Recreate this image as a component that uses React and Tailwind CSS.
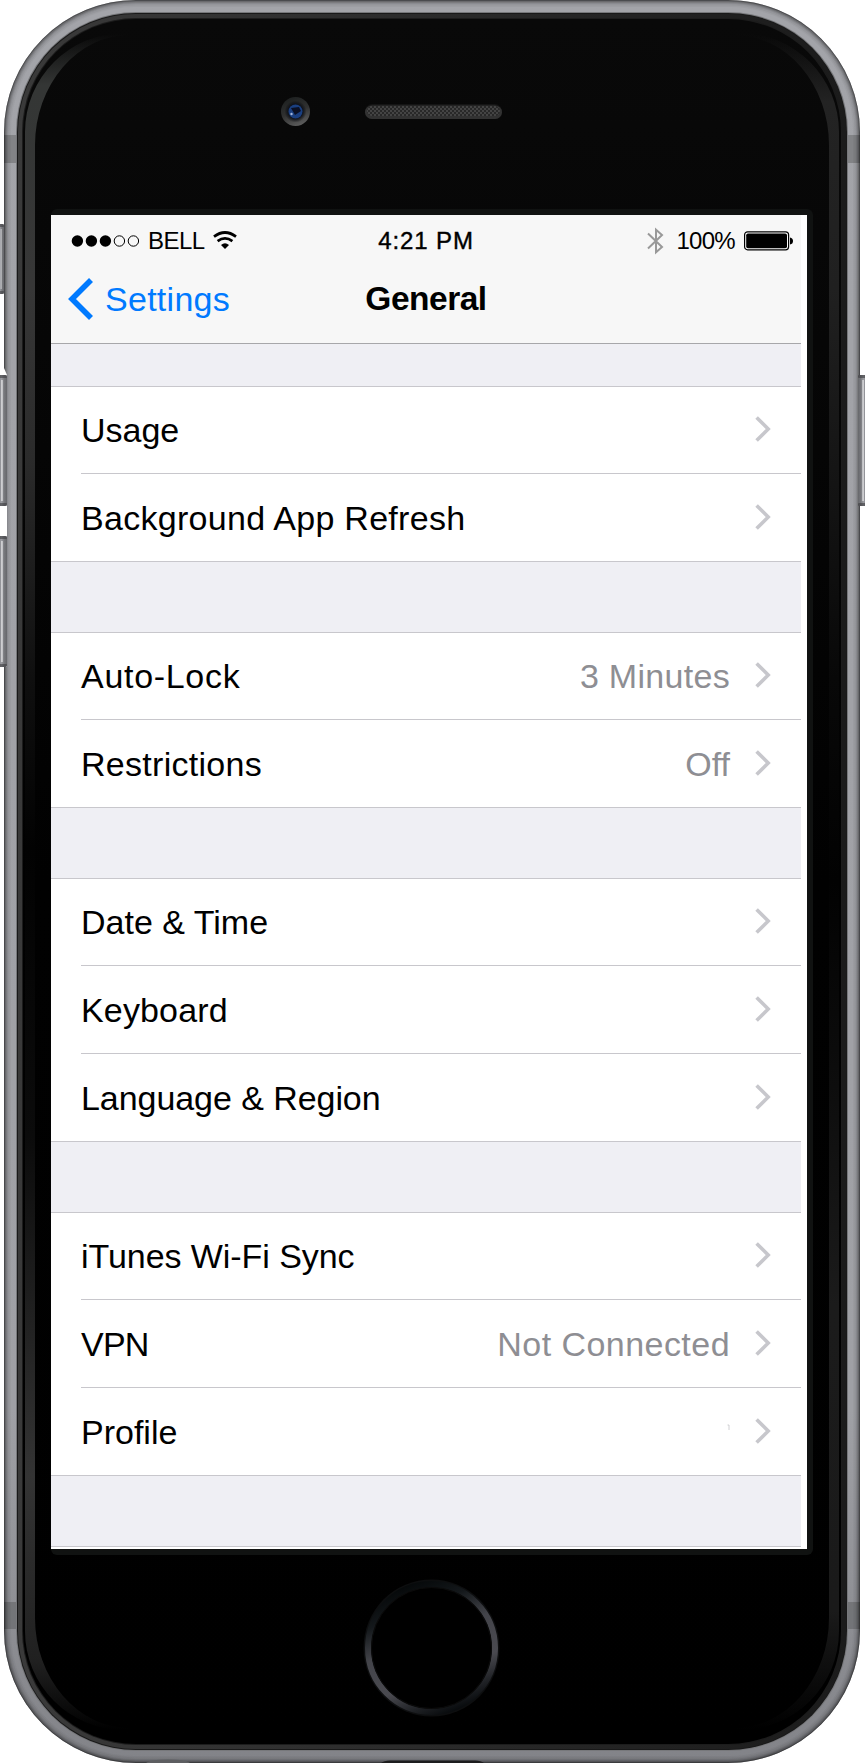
const groups = [
  [{ label: "Usage" }, { label: "Background App Refresh", tracking: "tracking-[0.29px]" }],
  [
    { label: "Auto-Lock", tracking: "tracking-[0.7px]", value: "3 Minutes", valueTracking: "tracking-[0.3px]" },
    { label: "Restrictions", tracking: "tracking-[0.28px]", value: "Off" },
  ],
  [
    { label: "Date & Time" },
    { label: "Keyboard", tracking: "tracking-[0.15px]" },
    { label: "Language & Region", tracking: "tracking-[-0.06px]" },
  ],
  [
    { label: "iTunes Wi-Fi Sync", tracking: "tracking-[-0.06px]" },
    { label: "VPN", tracking: "tracking-[-0.8px]", value: "Not Connected", valueTracking: "tracking-[0.45px]" },
    { label: "Profile", tick: true },
  ],
];

const bevel = [
  { width: 1, opacity: 0.28 },
  { width: 2, opacity: 0.14 },
  { width: 3, opacity: 0.1 },
  { width: 4, opacity: 0.07 },
  { width: 5.5, opacity: 0.05 },
  { width: 7, opacity: 0.03 },
];

const sheenPath =
  "M25 132 A99 99 0 0 1 124 33 L130 35 A95 110 0 0 0 35 145 V1618 A95 110 0 0 0 130 1728 L124 1730 A99 99 0 0 1 25 1631Z";

function Body({ inset, fill }) {
  return (
    <rect x={4 + inset} y={inset} width={856 - inset * 2} height={1763 - inset * 2} rx={132 - inset} fill={fill} />
  );
}

function SideButton({ x, y, height, width, flip }) {
  return (
    <g transform={flip ? `translate(${x + width} ${y}) scale(-1 1)` : `translate(${x} ${y})`}>
      <rect x="-4" width={width + 4} height={height} rx="2" fill="url(#button)" />
      <rect x={width * 0.15} y="5" width={width * 0.25} height={height - 10} fill="#e4e4e6" opacity="0.75" />
      <rect x="-4" width={width + 4} height="3" rx="1" fill="#3c3c40" opacity="0.6" />
      <rect x="-4" y={height - 3} width={width + 4} height="3" rx="1" fill="#3c3c40" opacity="0.6" />
    </g>
  );
}

function Hardware() {
  return (
    <svg className="absolute inset-0" width="865" height="1763" viewBox="0 0 865 1763" aria-hidden="true">
      <defs>
        <linearGradient id="metal" x1="0" y1="0" x2="0" y2="1">
          <stop offset="0" stopColor="#a3a4a9" />
          <stop offset="0.8" stopColor="#9fa0a5" />
          <stop offset="0.93" stopColor="#8c8d92" />
          <stop offset="1" stopColor="#828388" />
        </linearGradient>
        <linearGradient id="glass" x1="0" y1="0" x2="0" y2="1">
          <stop offset="0" stopColor="#090909" />
          <stop offset="0.5" stopColor="#010101" />
          <stop offset="1" stopColor="#000" />
        </linearGradient>
        <linearGradient id="rim" x1="0" y1="0" x2="1" y2="0">
          <stop offset="0" stopColor="#3a3a3a" />
          <stop offset="1" stopColor="#1b1b1b" />
        </linearGradient>
        <linearGradient id="button" x1="0" y1="0" x2="1" y2="0">
          <stop offset="0" stopColor="#77787c" />
          <stop offset="0.5" stopColor="#9a9ba0" />
          <stop offset="0.75" stopColor="#77787c" />
          <stop offset="1" stopColor="#66676b" />
        </linearGradient>
        <linearGradient id="sheenL" gradientUnits="userSpaceOnUse" x1="0" y1="34" x2="0" y2="1730">
          <stop offset="0" stopColor="#343635" stopOpacity="0" />
          <stop offset="0.03" stopColor="#343635" />
          <stop offset="0.15" stopColor="#373737" />
          <stop offset="0.25" stopColor="#2b2b2b" />
          <stop offset="0.38" stopColor="#0f0f0f" />
          <stop offset="0.48" stopColor="#020202" />
          <stop offset="0.65" stopColor="#0b0b0b" />
          <stop offset="0.85" stopColor="#343434" />
          <stop offset="0.96" stopColor="#202020" />
          <stop offset="1" stopColor="#202020" stopOpacity="0" />
        </linearGradient>
        <linearGradient id="sheenR" gradientUnits="userSpaceOnUse" x1="0" y1="34" x2="0" y2="1730">
          <stop offset="0" stopColor="#222" stopOpacity="0" />
          <stop offset="0.04" stopColor="#232323" />
          <stop offset="0.15" stopColor="#202020" />
          <stop offset="0.38" stopColor="#080808" />
          <stop offset="0.5" stopColor="#020202" />
          <stop offset="0.62" stopColor="#0d0d0d" />
          <stop offset="0.75" stopColor="#1b1b1b" />
          <stop offset="0.93" stopColor="#1a1a1a" />
          <stop offset="1" stopColor="#1a1a1a" stopOpacity="0" />
        </linearGradient>
        <linearGradient id="home" x1="0.3" y1="0" x2="0.7" y2="1">
          <stop offset="0" stopColor="#050809" />
          <stop offset="0.2" stopColor="#14181b" />
          <stop offset="0.42" stopColor="#43444a" />
          <stop offset="0.7" stopColor="#4a4a50" />
          <stop offset="0.87" stopColor="#202226" />
          <stop offset="1" stopColor="#05080a" />
        </linearGradient>
        <linearGradient id="lensRing" x1="0.3" y1="0" x2="0.7" y2="1">
          <stop offset="0" stopColor="#1d2020" />
          <stop offset="0.5" stopColor="#303131" />
          <stop offset="1" stopColor="#606060" />
        </linearGradient>
        <radialGradient id="lens">
          <stop offset="0" stopColor="#0a0e18" />
          <stop offset="0.6" stopColor="#0a0e18" />
          <stop offset="1" stopColor="#0a0a0c" stopOpacity="0" />
        </radialGradient>
        <pattern id="mesh" width="4" height="4" patternUnits="userSpaceOnUse">
          <rect width="4" height="4" fill="#282828" />
          <rect width="2" height="2" fill="#444" />
          <rect x="2" y="2" width="2" height="2" fill="#444" />
        </pattern>
      </defs>

      <Body inset={0} fill="url(#metal)" />
      <rect x="4" y="135" width="14" height="28" fill="#77787b" opacity="0.75" />
      <rect x="846" y="135" width="14" height="28" fill="#77787b" opacity="0.75" />
      <rect x="4" y="1602" width="14" height="27" fill="#68696c" opacity="0.7" />
      <rect x="846" y="1602" width="14" height="27" fill="#68696c" opacity="0.7" />
      {bevel.map(({ width, opacity }) => (
        <rect
          key={width}
          x={4 + width / 2}
          y={width / 2}
          width={856 - width}
          height={1763 - width}
          rx={132 - width / 2}
          fill="none"
          stroke="#000"
          strokeWidth={width}
          opacity={opacity}
        />
      ))}
      <path d="M4 368 L7 375 V667 H4Z" fill="#fff" />
      <SideButton x={0} y={224} width={4} height={70} />
      <SideButton x={0} y={375} width={7} height={131} />
      <SideButton x={0} y={536} width={7} height={131} />
      <SideButton x={858} y={375} width={7} height={131} flip />
      <path d="M146 1763 Q150 1759.5 168 1759.5 Q186 1759.5 190 1763Z" fill="#5d5e61" />
      <path d="M381 1763 Q384 1760.5 390 1760.5 H475 Q481 1760.5 484 1763Z" fill="#1d1d1e" />

      <Body inset={12} fill="#77787b" />
      <Body inset={13} fill="#191919" />
      <Body inset={14} fill="url(#rim)" />
      <Body inset={18} fill="#1c1c1c" />
      <Body inset={19} fill="url(#glass)" />

      <path d={sheenPath} fill="url(#sheenL)" />
      <path d={sheenPath} fill="url(#sheenR)" transform="translate(864 0) scale(-1 1)" />

      <rect x="51" y="209" width="762" height="1346" rx="6" fill="#101211" />

      <circle cx="295.5" cy="111.5" r="14.5" fill="url(#lensRing)" />
      <circle cx="295.5" cy="111.5" r="11" fill="url(#lens)" />
      <circle cx="295.5" cy="111.5" r="7" fill="#1a3f80" />
      <path d="M291 108 L299 107 L301 111 L295 115Z" fill="#0b1024" />
      <circle cx="291.5" cy="114" r="1.2" fill="#a5b8df" />

      <rect x="365" y="104" width="137" height="15" rx="7.5" fill="#141414" />
      <rect x="365" y="105.5" width="137" height="13.5" rx="6.7" fill="#323232" />
      <rect x="367" y="106" width="133" height="10" rx="5" fill="url(#mesh)" />

      <ellipse cx="431.5" cy="1648" rx="68" ry="68.5" fill="#0d0e0f" />
      <ellipse cx="431.5" cy="1648" rx="63.5" ry="64" fill="none" stroke="url(#home)" strokeWidth="6" />
      <ellipse cx="431.5" cy="1648" rx="60" ry="60.5" fill="#000" stroke="#0b0b0b" strokeWidth="1" />
    </svg>
  );
}

function SignalDots() {
  return (
    <svg width="68" height="12" viewBox="0 0 68 12" className="overflow-visible">
      {[6.4, 20.4, 34.4].map((x) => (
        <circle key={x} cx={x} cy="6" r="5.7" fill="#000" />
      ))}
      {[48.4, 62.4].map((x) => (
        <circle key={x} cx={x} cy="6" r="5.2" fill="none" stroke="#000" strokeWidth="1" />
      ))}
    </svg>
  );
}

function Wifi() {
  return (
    <svg width="24" height="18" viewBox="0 0 24 18" fill="none" stroke="#000" strokeWidth="2.7">
      <path d="M1 5.6 Q12 -2.6 23 5.6" />
      <path d="M4.6 10.2 Q12 4.6 19.4 10.2" />
      <path d="M8 14 Q12 10.6 16 14 L12 18Z" fill="#000" stroke="none" />
    </svg>
  );
}

function Bluetooth() {
  return (
    <svg width="17" height="28" viewBox="0 0 17 28" fill="none" stroke="#999" strokeWidth="2">
      <path d="M1 6.5 L15 20 L9 25.2 V2.8 L15 8 L1 21.5" />
    </svg>
  );
}

function Battery() {
  return (
    <svg width="50" height="20" viewBox="0 0 50 20">
      <rect x="0.6" y="0.8" width="44" height="18" rx="3" fill="#fff" stroke="#000" strokeWidth="1.2" />
      <rect x="2.2" y="2.4" width="40.8" height="14.8" rx="1.8" fill="#000" />
      <path d="M46 6.5 Q49 7 49 10 Q49 13 46 13.5Z" fill="#000" />
    </svg>
  );
}

function Row({ label, value, tick, tracking = "", valueTracking = "", first, last }) {
  return (
    <div className="bg-white pl-[30px]">
      <div
        className={
          "flex items-center pr-[30px] border-[#c8c7cc] " +
          (first || last ? "h-[87px] " : "h-[88px] ") +
          (last ? "" : "border-b")
        }
      >
        <span className={"flex-1 text-black " + tracking}>{label}</span>
        {value && <span className={"mr-[25px] text-[#8e8e93] " + valueTracking}>{value}</span>}
        {tick && (
          <svg className="mr-[25px] -mt-2" width="3" height="8" viewBox="0 0 3 8">
            <path d="M0.5 1 H2 V6" fill="none" stroke="#c4c4c8" strokeWidth="0.8" />
          </svg>
        )}
        <svg className="-mt-0.5" width="16" height="26" viewBox="0 0 16 26" fill="none" stroke="#c7c7cc" strokeWidth="3.6">
          <path d="M1.6 1.4 L13.2 13 L1.6 24.6" />
        </svg>
      </div>
    </div>
  );
}

export default function App() {
  return (
    <div className="relative h-[1763px] w-[865px] overflow-hidden bg-white pl-[51px] pt-[215px] font-['Liberation_Sans',Arial,sans-serif]">
      <Hardware />
      <main className="relative h-[1334px] w-[756px] overflow-hidden bg-white pr-[6px]">
        <header className="h-[129px] border-b border-[#a7a7aa] bg-[#f7f7f7]">
          <div className="grid h-[51px] grid-cols-[1fr_auto_1fr] items-center px-[7px] text-[24px] leading-none">
            <div className="flex items-center pl-[13px]">
              <SignalDots />
              <span className="ml-[9px] tracking-[-0.5px]">BELL</span>
              <span className="-mt-0.5 ml-[8.5px]"><Wifi /></span>
            </div>
            <span className="tracking-[0.9px] [-webkit-text-stroke:0.4px_#000]">4:21 PM</span>
            <div className="flex items-center justify-end">
              <Bluetooth />
              <span className="ml-[12px] tracking-[-0.7px]">100%</span>
              <span className="ml-[9px]"><Battery /></span>
            </div>
          </div>
          <div className="grid h-[66px] grid-cols-[1fr_auto_1fr] items-center px-[17px] text-[34px] leading-none">
            <div className="flex items-center text-[#007aff]">
              <svg width="26" height="42" viewBox="0 0 26 42" fill="none" stroke="#007aff" strokeWidth="5.6">
                <path d="M23 2 L4 21 L23 40" />
              </svg>
              <span className="ml-[11px] tracking-[0.28px]">Settings</span>
            </div>
            <h1 className="text-[33.5px] font-bold tracking-[-0.5px]">General</h1>
            <span />
          </div>
        </header>
        <div className="flex flex-col gap-[70px] bg-[#efeff4] pt-[42px] pb-[70px] text-[34px] leading-none">
          {groups.map((rows) => (
            <section key={rows[0].label} className="border-y border-[#c8c7cc]">
              {rows.map((row, i) => (
                <Row key={row.label} {...row} first={i === 0} last={i === rows.length - 1} />
              ))}
            </section>
          ))}
        </div>
        <div className="border-t border-[#c8c7cc]" />
      </main>
    </div>
  );
}
